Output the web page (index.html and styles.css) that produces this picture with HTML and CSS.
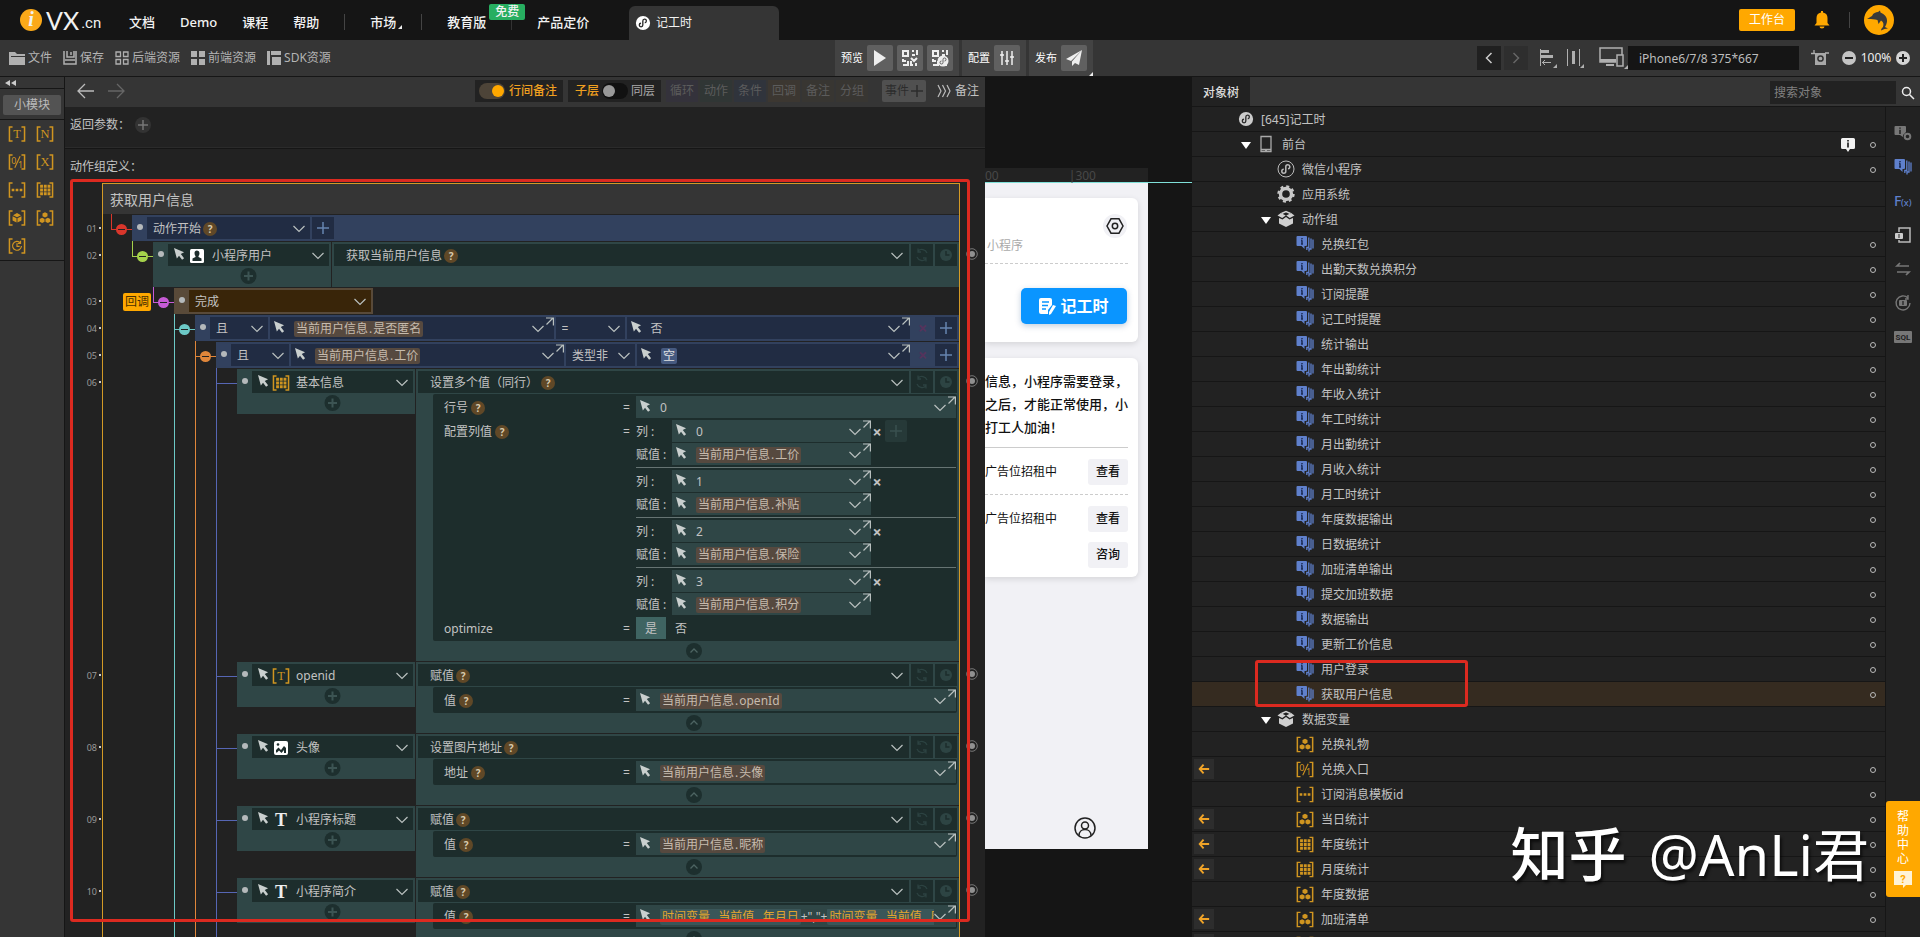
FILE: index.html
```html
<!DOCTYPE html>
<html lang="zh-CN">
<head>
    <meta charset="UTF-8">
    <meta name="viewport" content="width=device-width, initial-scale=1.0">
    <title>iVX - 记工时</title>
    <link rel="stylesheet" href="styles.css">
</head>
<body>

<!-- Icônes partagées -->
<svg class="sprite" aria-hidden="true">
  <symbol id="cursor" viewBox="0 0 12 13"><path fill="#c9cfce" d="M0 0l11 4.600-3.600 1.800L11 11l-2.200 1.800-3.300-4.300-2.400 3z"/></symbol>
  <symbol id="chev" viewBox="0 0 12 8"><path fill="none" stroke="#b9c0bf" stroke-width="1.200" d="M.500 1L6 6.500 11.500 1"/></symbol>
  <symbol id="ne" viewBox="0 0 9 9"><path fill="none" stroke="#b9c0bf" stroke-width="1.200" d="M1 1h7.400v7.500M8 1L1.500 7.500"/></symbol>
  <symbol id="plus" viewBox="0 0 12 12"><path stroke="currentColor" stroke-width="1.500" d="M6 0v12M0 6h12"/></symbol>
  <symbol id="addc" viewBox="0 0 16 16"><circle cx="8" cy="8" r="8" fill="#1d2f2e"/><path stroke="#3c5453" stroke-width="2" d="M8 3.500v9M3.500 8h9"/></symbol>
  <symbol id="upc" viewBox="0 0 16 16"><circle cx="8" cy="8" r="8" fill="#1d2f2e"/><path fill="none" stroke="#4d6462" stroke-width="1.300" d="M4.500 9.500L8 6l3.500 3.500"/></symbol>
  <symbol id="loop" viewBox="0 0 14 14"><path fill="none" stroke="#2c4241" stroke-width="1.300" d="M12 5A5.500 5.500 0 0 0 3 3M2 9a5.500 5.500 0 0 0 9 2M3 .500V4h3M11 13.500V10H8"/></symbol>
  <symbol id="clock" viewBox="0 0 14 14"><circle cx="7" cy="7" r="6" fill="#2d4443"/><path fill="none" stroke="#1d2d2c" stroke-width="1.500" d="M7 3v4h3.500"/></symbol>
  <symbol id="watch" viewBox="0 0 12 12"><circle cx="6" cy="6" r="5.300" fill="none" stroke="#777"/><circle cx="6" cy="6" r="3" fill="#909090"/></symbol>
  <symbol id="brk" viewBox="0 0 20 18"><path fill="none" stroke="currentColor" stroke-width="1.700" d="M5 1H1.500v16H5M15 1h3.500v16H15"/></symbol>
  <symbol id="vT" viewBox="0 0 20 18"><use href="#brk"/><text x="10" y="14" class="vtext">T</text></symbol>
  <symbol id="vN" viewBox="0 0 20 18"><use href="#brk"/><text x="10" y="14" class="vtext">N</text></symbol>
  <symbol id="vX" viewBox="0 0 20 18"><use href="#brk"/><text x="10" y="14" class="vtext">X</text></symbol>
  <symbol id="v01" viewBox="0 0 20 18"><use href="#brk"/><text x="6.500" y="11" class="vnum">0</text><text x="14" y="15.500" class="vnum">1</text><path stroke="currentColor" stroke-width="1.200" d="M13.500 2.500l-6 13"/></symbol>
  <symbol id="vdots" viewBox="0 0 20 18"><use href="#brk"/><path stroke="currentColor" stroke-width="3" d="M4 9h3M8.500 9h3M13 9h3"/></symbol>
  <symbol id="vgrid" viewBox="0 0 20 18"><use href="#brk"/><path stroke="currentColor" stroke-width="3.200" stroke-dasharray="3.200 1" d="M4.500 4.800H17M4.500 9H17M4.500 13.200H17"/></symbol>
  <symbol id="vcube" viewBox="0 0 20 18"><use href="#brk"/><path fill="currentColor" d="M10 3.500l4.500 2.300L10 8.200 5.500 5.800zM5 6.900l4.500 2.300v5L5 11.800zM15 6.900l-4.500 2.300v5l4.500-2.400z"/></symbol>
  <symbol id="vtree" viewBox="0 0 20 18"><use href="#brk"/><g fill="currentColor"><path d="M10 2.500l2.800 1.500v3L10 8.500 7.200 7V4z"/><path d="M6.800 8.700l2.700 1.400v3l-2.700 1.500L4 13.100v-3zM13.200 8.700l2.800 1.400v3l-2.800 1.500-2.700-1.500v-3z"/></g></symbol>
  <symbol id="vtime" viewBox="0 0 20 18"><use href="#brk"/><path fill="none" stroke="currentColor" stroke-width="1.300" d="M13.800 5.500A5 5 0 1 0 15 9M10 6v3.500h3M14 3v3h-3"/></symbol>
  <symbol id="mini" viewBox="0 0 18 18"><circle cx="9" cy="9" r="8"/><path class="knot" d="M6.800 9.300a2 2 0 1 0 2 2V6.700a2 2 0 1 1 2.200 2"/></symbol>
  <symbol id="act" viewBox="0 0 18 18"><path fill="#5f80cc" d="M1.500 1H10a1 1 0 0 1 1 1v8a1 1 0 0 1-1 1H8.500v3L5.500 11h-4a1 1 0 0 1-1-1V2a1 1 0 0 1 1-1z"/><path stroke="#1d2c55" stroke-width="1.500" d="M6 3v1.200M6 5.200v4M5 5.500h1M5 9h2"/><path fill="none" stroke="#5f80cc" stroke-width="1.300" d="M12.800 2.500v10h-2v2.500M15 3.500v10.500h-2v2.500M17 4.500v9"/></symbol>
  <symbol id="box" viewBox="0 0 18 18"><path fill="none" stroke="#d0d0d0" stroke-width="1.500" d="M4.500 3.500L9 1.500l4.500 2"/><path fill="#d0d0d0" d="M3.800 3l5 2.500L5.200 8 .500 5.500zM14.200 3l-5 2.500L12.800 8l4.700-2.500zM2 8l3.500 1.500L9 7l3.500 2.500L16 8v5.500L9 17l-7-3.500z"/></symbol>
  <symbol id="gear" viewBox="0 0 18 18"><circle cx="9" cy="9" r="5.500" fill="none" stroke="#c8c8c8" stroke-width="3.400"/><circle cx="9" cy="9" r="7.600" fill="none" stroke="#c8c8c8" stroke-width="2.200" stroke-dasharray="3 2.970"/></symbol>
  <symbol id="phone" viewBox="0 0 18 18"><path fill="none" stroke="#aaa" stroke-width="1.300" d="M4 1.500h10v15H4zM4 14.500h10M8 16h2"/></symbol>
  <symbol id="left" viewBox="0 0 14 12"><path fill="none" stroke="#f0a428" stroke-width="2.200" d="M13 6H2M6.500 1L2 6l4.500 5"/></symbol>
  <symbol id="qr" viewBox="0 0 18 18"><path fill="none" stroke="#eee" stroke-width="2" d="M2 2h5v5H2zM11 2h2M16 1v5M11 6h3M2 10v2h3M2 16h5v-4M10 9l3 3 3-3M10 12v4h2M15 14v3"/></symbol>
</svg>

<header class="topbar">
  <a class="logo" href="#"><span class="logo-i">i</span><span class="logo-vx">VX</span><span class="logo-cn">.cn</span></a>
  <nav class="topnav">
    <a href="#">文档</a><a href="#">Demo</a><a href="#">课程</a><a href="#">帮助</a>
    <span class="bar"></span>
    <a href="#" class="market">市场</a>
    <span class="bar"></span>
    <a href="#" class="edu">教育版<span class="free">免费</span></a>
    <a href="#" class="price">产品定价</a>
  </nav>
  <div class="doc-tab"><svg width="16" height="16" class="mini-white"><use href="#mini"/></svg>记工时</div>
  <div class="account">
    <button class="work">工作台</button>
    <svg width="16" height="18" viewBox="0 0 16 18"><path fill="#ffa800" d="M7 0h2v1.500c3 .500 4.500 2.500 4.500 5.500v5l2 2.500H.500l2-2.500V7c0-3 1.500-5 4.500-5.500zM5.500 15.500h5a2.500 2 0 0 1-5 0z"/></svg>
    <span class="bar"></span>
    <svg width="30" height="30" viewBox="0 0 30 30"><circle cx="15" cy="15" r="15" fill="#ffa800"/><path fill="#3a3a3a" d="M3 14c2-1 3-2 5-3 1-3 4-4 6-4l2-1.500.500 2c4 1.500 7 5 6.500 9-.300 2-1 4-2 5.500l3 1.500-3.500.500-3.500 1.500c0-1.500 1-2.500 2-3.500 1-3 .500-5-2-6.500l-2.500 3.500-1-4c-3-1-6-1-8.500-1z"/></svg>
  </div>
</header>

<div class="toolbar">
  <div class="files">
    <button><svg width="16" height="13" viewBox="0 0 16 13"><path fill="#b0b0b0" d="M0 0h6l2 2h8v2H2v1h14v8H0z"/></svg>文件</button>
    <button><svg width="14" height="14" viewBox="0 0 14 14"><path fill="none" stroke="#b0b0b0" stroke-width="1.500" d="M1 0v13h12V0M4 0v6h7V0M8 1v3M2 9h10"/></svg>保存</button>
    <button><svg width="14" height="14" viewBox="0 0 14 14"><path fill="none" stroke="#b0b0b0" stroke-width="1.300" d="M1 1h4.500v4.500H1zM8.500 1H13v4.500H8.500zM1 8.500h4.500V13H1zM8.500 8.500H13V13H8.500z"/></svg>后端资源</button>
    <button><svg width="14" height="14" viewBox="0 0 14 14"><path fill="#b0b0b0" d="M0 0h6v6H0zM8 0h6v6H8zM0 8h6v6H0zM8 8h6v6H8z"/></svg>前端资源</button>
    <button><svg width="14" height="14" viewBox="0 0 14 14"><path fill="#b0b0b0" d="M0 0h3v14H0zM4 0h10v4H4zM5 6h9v8H5z"/></svg>SDK资源</button>
  </div>
  <div class="runs">
    <div class="run">预览
      <button aria-label="运行"><svg width="16" height="16" viewBox="0 0 16 16"><path fill="#eee" d="M2 0l12 8-12 8z"/></svg></button>
      <button aria-label="二维码"><svg width="18" height="18"><use href="#qr"/></svg></button>
      <button aria-label="小程序码"><svg width="18" height="18" viewBox="0 0 18 18"><use href="#qr"/><circle cx="12" cy="12" r="5.500" fill="#eee"/><path fill="none" stroke="#606060" d="M10.500 12a1.500 1.500 0 1 0 1.500 1.500v-3a1.500 1.500 0 1 1 1.500 1.500"/></svg></button>
    </div>
    <div class="run">配置
      <button aria-label="配置"><svg width="16" height="16" viewBox="0 0 16 16"><path stroke="#eee" stroke-width="1.500" d="M3 1v14M8 1v14M13 1v14M1 5h4M6 11h4M11 7h4"/></svg></button>
    </div>
    <div class="run corner">发布
      <button aria-label="发布"><svg width="17" height="17" viewBox="0 0 17 17"><path fill="#eee" d="M16 0L0 9l5 2zM16 0L6 11.500V16l3-3 4 2z"/></svg></button>
    </div>
  </div>
  <div class="view">
    <button class="step" aria-label="上一个"><svg width="8" height="12" viewBox="0 0 8 12"><path fill="none" stroke="#ccc" stroke-width="1.500" d="M6.500 1l-5 5 5 5"/></svg></button>
    <button class="step off" aria-label="下一个"><svg width="8" height="12" viewBox="0 0 8 12"><path fill="none" stroke="#666" stroke-width="1.500" d="M1.500 1l5 5-5 5"/></svg></button>
    <svg class="align" width="18" height="20" viewBox="0 0 18 20"><path fill="none" stroke="#b0b0b0" d="M1.500 1v17M3 14.500h9M6 12l-2.500 2.500L6 17"/><path fill="#b0b0b0" d="M2 2h8v3H2zM2 7h12v3H2zM18 16v4h-4z"/></svg>
    <svg class="dist" width="18" height="20" viewBox="0 0 18 20"><path stroke="#b0b0b0" d="M1.500 1v17M13.500 1v17"/><path fill="#b0b0b0" d="M6 3h3v13H6zM18 16v4h-4z"/></svg>
    <svg width="30" height="24" viewBox="0 0 30 24"><path fill="none" stroke="#b0b0b0" stroke-width="1.500" d="M18 16H2V2h22v7M19 9h6v11h-6z"/><path fill="#b0b0b0" d="M2 13h16v3H2zM8 18h8v2H8zM30 19v4h-4z"/></svg>
    <input class="device" type="text" value="iPhone6/7/8 375*667" aria-label="设备尺寸">
    <svg class="crop" width="18" height="16" viewBox="0 0 18 16"><path fill="none" stroke="#b0b0b0" stroke-width="1.300" d="M0 3.500h4M3 0v4M14 3h4"/><path fill="#a8a8a8" d="M4 3h11v12H4z"/><circle cx="9.500" cy="8.500" r="2.600" fill="none" stroke="#333" stroke-width="1.500"/></svg>
    <button aria-label="缩小"><svg width="14" height="14" viewBox="0 0 14 14"><circle cx="7" cy="7" r="7" fill="#c4c4c4"/><path stroke="#222" stroke-width="2" d="M3 7h8"/></svg></button>
    <span class="zoom">100%</span>
    <button aria-label="放大"><svg width="14" height="14" viewBox="0 0 14 14"><circle cx="7" cy="7" r="7" fill="#d4d4d4"/><path stroke="#222" stroke-width="2" d="M3 7h8M7 3v8"/></svg></button>
  </div>
</div>

<main class="studio">
  <aside class="modules">
    <div class="fold"><svg width="12" height="6" viewBox="0 0 12 6"><path fill="#ccc" d="M5 0v6L0 3zM11 0v6L6 3z"/></svg></div>
    <div class="mod-head"><button>小模块</button></div>
    <div class="mod-grid">
      <svg><use href="#vT"/></svg><svg><use href="#vN"/></svg>
      <svg><use href="#v01"/></svg><svg><use href="#vX"/></svg>
      <svg><use href="#vdots"/></svg><svg><use href="#vgrid"/></svg>
      <svg><use href="#vcube"/></svg><svg><use href="#vtree"/></svg>
      <svg><use href="#vtime"/></svg>
    </div>
  </aside>

  <section class="editor">
    <div class="ed-head">
      <button aria-label="后退"><svg width="17" height="16" viewBox="0 0 17 16"><path fill="none" stroke="#bbb" stroke-width="1.300" d="M17 8H1M8 1L1 8l7 7"/></svg></button>
      <button aria-label="前进"><svg width="17" height="16" viewBox="0 0 17 16"><path fill="none" stroke="#666" stroke-width="1.300" d="M0 8h16M9 1l7 7-7 7"/></svg></button>
      <div class="ed-tools">
        <label class="sw"><input type="checkbox" checked>行间备注</label>
        <label class="sw layer">子层<input type="checkbox"><span>同层</span></label>
        <div class="ghosts">
          <button class="g-vio">循环</button><button class="g-grn">动作</button><button class="g-blu">条件</button><button class="g-brn">回调</button><button class="g-olv">备注</button><button class="g-olv">分组</button>
        </div>
        <button class="event">事件<svg width="12" height="12"><use href="#plus"/></svg></button>
        <button class="notes"><svg width="14" height="14" viewBox="0 0 14 14"><path fill="none" stroke="#bbb" stroke-width="1.200" d="M1 1l3 6-3 6M5.500 1l3 6-3 6M10 1l3 6-3 6"/></svg>备注</button>
      </div>
    </div>
    <div class="params-head">返回参数：<svg width="16" height="16" viewBox="0 0 16 16"><circle cx="8" cy="8" r="8" fill="#333"/><path stroke="#777" stroke-width="1.500" d="M8 3v10M3 8h10"/></svg></div>
    <div class="def-head">动作组定义：</div>

    <div class="script">
      <div class="row"><span class="num blank"></span><h2 class="body title">获取用户信息</h2><span class="eye"></span></div>

      <div class="row">
        <span class="num">01</span>
        <div class="body d1">
          <span class="join red"></span>
          <div class="block blue"><i class="dot"></i><button class="sel w161">动作开始<b class="q">?</b><svg class="chev"><use href="#chev"/></svg></button><button class="sq"><svg width="12" height="12"><use href="#plus"/></svg></button></div>
        </div>
        <span class="eye"></span>
      </div>

      <div class="row">
        <span class="num">02</span>
        <div class="body d2">
          <span class="join lime"></span>
          <div class="cell obj">
            <div class="line"><i class="dot"></i><label class="sel"><svg class="cur"><use href="#cursor"/></svg><svg width="14" height="14" viewBox="0 0 14 14"><rect width="14" height="14" rx="1.500" fill="#fff"/><path fill="#1d2d2c" d="M4.500 4a2.500 2.500 0 0 1 5 0q0 2-1 3v1l3 1.500V12h-9V9.500l3-1.500V7q-1-1-1-3z"/></svg><select><option>小程序用户</option></select><svg class="chev"><use href="#chev"/></svg></label></div>
            <svg class="add"><use href="#addc"/></svg>
          </div>
          <div class="cell act">
            <div class="line"><button class="sel">获取当前用户信息<b class="q">?</b><svg class="chev"><use href="#chev"/></svg></button><button class="sm"><svg><use href="#loop"/></svg></button><button class="sm"><svg><use href="#clock"/></svg></button></div>
          </div>
        </div>
        <span class="eye"><svg><use href="#watch"/></svg></span>
      </div>

      <div class="row">
        <span class="num">03</span>
        <div class="body d3">
          <span class="cb">回调</span>
          <span class="join purple"></span>
          <div class="block brown"><i class="dot"></i><label class="sel"><select><option>完成</option></select><svg class="chev"><use href="#chev"/></svg></label></div>
        </div>
        <span class="eye"></span>
      </div>

      <div class="row">
        <span class="num">04</span>
        <div class="body d4">
          <span class="join teal thru"></span>
          <div class="block blue cond"><i class="dot"></i><label class="sel and"><select><option>且</option></select><svg class="chev"><use href="#chev"/></svg></label><button class="expr"><svg class="cur"><use href="#cursor"/></svg><span class="chip">当前用户信息<i>.</i>是否匿名</span><svg class="chev"><use href="#chev"/></svg><svg class="ne"><use href="#ne"/></svg></button><label class="sel cmp"><select><option>=</option></select><svg class="chev"><use href="#chev"/></svg></label><button class="expr"><svg class="cur"><use href="#cursor"/></svg><span class="val">否</span><svg class="chev"><use href="#chev"/></svg><svg class="ne"><use href="#ne"/></svg></button><button class="del">×</button><button class="sq"><svg width="12" height="12"><use href="#plus"/></svg></button></div>
        </div>
        <span class="eye"></span>
      </div>

      <div class="row">
        <span class="num">05</span>
        <div class="body d4">
          <span class="guide teal"></span><span class="join orange thru"></span>
          <div class="block blue cond"><i class="dot"></i><label class="sel and"><select><option>且</option></select><svg class="chev"><use href="#chev"/></svg></label><button class="expr"><svg class="cur"><use href="#cursor"/></svg><span class="chip">当前用户信息<i>.</i>工价</span><svg class="chev"><use href="#chev"/></svg><svg class="ne"><use href="#ne"/></svg></button><label class="sel cmp"><select><option>类型非</option></select><svg class="chev"><use href="#chev"/></svg></label><button class="expr"><svg class="cur"><use href="#cursor"/></svg><span class="chip null">空</span><svg class="chev"><use href="#chev"/></svg><svg class="ne"><use href="#ne"/></svg></button><button class="del">×</button><button class="sq"><svg width="12" height="12"><use href="#plus"/></svg></button></div>
        </div>
        <span class="eye"></span>
      </div>

      <div class="row">
        <span class="num">06</span>
        <div class="body d4">
          <span class="guide teal"></span><span class="guide orange"></span><span class="join indigo thru leaf"></span>
          <div class="cell obj">
            <div class="line"><i class="dot"></i><label class="sel"><svg class="cur"><use href="#cursor"/></svg><svg class="var"><use href="#vgrid"/></svg><select><option>基本信息</option></select><svg class="chev"><use href="#chev"/></svg></label></div>
            <svg class="add"><use href="#addc"/></svg>
          </div>
          <div class="cell act">
            <div class="line"><button class="sel">设置多个值（同行）<b class="q wide">?</b><svg class="chev"><use href="#chev"/></svg></button><button class="sm"><svg><use href="#loop"/></svg></button><button class="sm"><svg><use href="#clock"/></svg></button></div>
            <div class="args">
              <div class="arg"><span class="name">行号 <b class="q">?</b></span><span class="eq">=</span><button class="expr"><svg class="cur"><use href="#cursor"/></svg><span class="val">0</span><svg class="chev"><use href="#chev"/></svg><svg class="ne"><use href="#ne"/></svg></button></div>
              <div class="arg"><span class="name">配置列值 <b class="q">?</b></span><span class="eq">=</span>
                <div class="cols">
                  <div class="col"><span>列 :</span><button class="expr"><svg class="cur"><use href="#cursor"/></svg><span class="val">0</span><svg class="chev"><use href="#chev"/></svg><svg class="ne"><use href="#ne"/></svg></button><button class="rm">×</button><button class="more"><svg width="12" height="12"><use href="#plus"/></svg></button>
                    <span>赋值 :</span><button class="expr"><svg class="cur"><use href="#cursor"/></svg><span class="chip">当前用户信息<i>.</i>工价</span><svg class="chev"><use href="#chev"/></svg><svg class="ne"><use href="#ne"/></svg></button></div>
                  <div class="col"><span>列 :</span><button class="expr"><svg class="cur"><use href="#cursor"/></svg><span class="val">1</span><svg class="chev"><use href="#chev"/></svg><svg class="ne"><use href="#ne"/></svg></button><button class="rm">×</button><span></span>
                    <span>赋值 :</span><button class="expr"><svg class="cur"><use href="#cursor"/></svg><span class="chip">当前用户信息<i>.</i>补贴</span><svg class="chev"><use href="#chev"/></svg><svg class="ne"><use href="#ne"/></svg></button></div>
                  <div class="col"><span>列 :</span><button class="expr"><svg class="cur"><use href="#cursor"/></svg><span class="val">2</span><svg class="chev"><use href="#chev"/></svg><svg class="ne"><use href="#ne"/></svg></button><button class="rm">×</button><span></span>
                    <span>赋值 :</span><button class="expr"><svg class="cur"><use href="#cursor"/></svg><span class="chip">当前用户信息<i>.</i>保险</span><svg class="chev"><use href="#chev"/></svg><svg class="ne"><use href="#ne"/></svg></button></div>
                  <div class="col"><span>列 :</span><button class="expr"><svg class="cur"><use href="#cursor"/></svg><span class="val">3</span><svg class="chev"><use href="#chev"/></svg><svg class="ne"><use href="#ne"/></svg></button><button class="rm">×</button><span></span>
                    <span>赋值 :</span><button class="expr"><svg class="cur"><use href="#cursor"/></svg><span class="chip">当前用户信息<i>.</i>积分</span><svg class="chev"><use href="#chev"/></svg><svg class="ne"><use href="#ne"/></svg></button></div>
                </div>
              </div>
              <div class="arg"><span class="name">optimize</span><span class="eq">=</span><div class="yesno"><label><input type="radio" name="opt" checked>是</label><label><input type="radio" name="opt">否</label></div></div>
            </div>
            <svg class="up"><use href="#upc"/></svg>
          </div>
        </div>
        <span class="eye"><svg><use href="#watch"/></svg></span>
      </div>

      <div class="row">
        <span class="num">07</span>
        <div class="body d4">
          <span class="guide teal"></span><span class="guide orange"></span><span class="join indigo thru leaf"></span>
          <div class="cell obj">
            <div class="line"><i class="dot"></i><label class="sel"><svg class="cur"><use href="#cursor"/></svg><svg class="var"><use href="#vT"/></svg><select><option>openid</option></select><svg class="chev"><use href="#chev"/></svg></label></div>
            <svg class="add"><use href="#addc"/></svg>
          </div>
          <div class="cell act">
            <div class="line"><button class="sel">赋值<b class="q">?</b><svg class="chev"><use href="#chev"/></svg></button><button class="sm"><svg><use href="#loop"/></svg></button><button class="sm"><svg><use href="#clock"/></svg></button></div>
            <div class="args"><div class="arg"><span class="name">值 <b class="q">?</b></span><span class="eq">=</span><button class="expr"><svg class="cur"><use href="#cursor"/></svg><span class="chip">当前用户信息<i>.</i>openId</span><svg class="chev"><use href="#chev"/></svg><svg class="ne"><use href="#ne"/></svg></button></div></div>
            <svg class="up"><use href="#upc"/></svg>
          </div>
        </div>
        <span class="eye"><svg><use href="#watch"/></svg></span>
      </div>

      <div class="row">
        <span class="num">08</span>
        <div class="body d4">
          <span class="guide teal"></span><span class="guide orange"></span><span class="join indigo thru leaf"></span>
          <div class="cell obj">
            <div class="line"><i class="dot"></i><label class="sel"><svg class="cur"><use href="#cursor"/></svg><svg width="14" height="14" viewBox="0 0 14 14"><rect width="14" height="14" rx="2" fill="#fff"/><circle cx="4" cy="3.500" r="1.300" fill="#1d2d2c"/><path fill="#1d2d2c" d="M2 11.500V9l2.500-2.500L7 9l3-4 2 2v5h-2V9L7.500 12 5 9.500l-2 2z"/></svg><select><option>头像</option></select><svg class="chev"><use href="#chev"/></svg></label></div>
            <svg class="add"><use href="#addc"/></svg>
          </div>
          <div class="cell act">
            <div class="line"><button class="sel">设置图片地址<b class="q">?</b><svg class="chev"><use href="#chev"/></svg></button><button class="sm"><svg><use href="#loop"/></svg></button><button class="sm"><svg><use href="#clock"/></svg></button></div>
            <div class="args"><div class="arg"><span class="name">地址 <b class="q">?</b></span><span class="eq">=</span><button class="expr"><svg class="cur"><use href="#cursor"/></svg><span class="chip">当前用户信息<i>.</i>头像</span><svg class="chev"><use href="#chev"/></svg><svg class="ne"><use href="#ne"/></svg></button></div></div>
            <svg class="up"><use href="#upc"/></svg>
          </div>
        </div>
        <span class="eye"><svg><use href="#watch"/></svg></span>
      </div>

      <div class="row">
        <span class="num">09</span>
        <div class="body d4">
          <span class="guide teal"></span><span class="guide orange"></span><span class="join indigo thru leaf"></span>
          <div class="cell obj">
            <div class="line"><i class="dot"></i><label class="sel"><svg class="cur"><use href="#cursor"/></svg><span class="bigt">T</span><select><option>小程序标题</option></select><svg class="chev"><use href="#chev"/></svg></label></div>
            <svg class="add"><use href="#addc"/></svg>
          </div>
          <div class="cell act">
            <div class="line"><button class="sel">赋值<b class="q">?</b><svg class="chev"><use href="#chev"/></svg></button><button class="sm"><svg><use href="#loop"/></svg></button><button class="sm"><svg><use href="#clock"/></svg></button></div>
            <div class="args"><div class="arg"><span class="name">值 <b class="q">?</b></span><span class="eq">=</span><button class="expr"><svg class="cur"><use href="#cursor"/></svg><span class="chip">当前用户信息<i>.</i>昵称</span><svg class="chev"><use href="#chev"/></svg><svg class="ne"><use href="#ne"/></svg></button></div></div>
            <svg class="up"><use href="#upc"/></svg>
          </div>
        </div>
        <span class="eye"><svg><use href="#watch"/></svg></span>
      </div>

      <div class="row">
        <span class="num">10</span>
        <div class="body d4">
          <span class="guide teal"></span><span class="guide orange"></span><span class="join indigo thru leaf"></span>
          <div class="cell obj">
            <div class="line"><i class="dot"></i><label class="sel"><svg class="cur"><use href="#cursor"/></svg><span class="bigt">T</span><select><option>小程序简介</option></select><svg class="chev"><use href="#chev"/></svg></label></div>
            <svg class="add"><use href="#addc"/></svg>
          </div>
          <div class="cell act">
            <div class="line"><button class="sel">赋值<b class="q">?</b><svg class="chev"><use href="#chev"/></svg></button><button class="sm"><svg><use href="#loop"/></svg></button><button class="sm"><svg><use href="#clock"/></svg></button></div>
            <div class="args"><div class="arg"><span class="name">值 <b class="q">?</b></span><span class="eq">=</span><button class="expr"><svg class="cur"><use href="#cursor"/></svg><span class="clip"><span class="chip time">时间变量<i>.</i> 当前值<i>.</i> 年月日</span>+","+<span class="chip time">时间变量<i>.</i> 当前值<i>.</i> 周</span></span><svg class="chev"><use href="#chev"/></svg><svg class="ne"><use href="#ne"/></svg></button></div></div>
            <svg class="up"><use href="#upc"/></svg>
          </div>
        </div>
        <span class="eye"><svg><use href="#watch"/></svg></span>
      </div>
    </div>
    <div class="mark mark-script"></div>
  </section>

  <section class="canvas">
    <div class="ruler"><span>00</span><span>|300</span></div>
    <div class="screen">
      <div class="card">
        <svg class="hex" width="24" height="24" viewBox="0 0 24 24"><circle cx="12" cy="12" r="12" fill="#f1f1f5"/><path fill="none" stroke="#222" stroke-width="1.500" d="M8 4.800h8l4 7.200-4 7.200H8L4 12z"/><circle cx="12" cy="12" r="2.700" fill="none" stroke="#222" stroke-width="1.500"/></svg>
        <p class="sub">小程序</p>
        <hr class="dash">
        <button class="clockin"><svg width="17" height="17" viewBox="0 0 17 17"><path fill="#fff" d="M2 0h9a2 2 0 0 1 2 2v5l-4 5v4H2a2 2 0 0 1-2-2V2a2 2 0 0 1 2-2zM14 7l3 1-5 8-2 1v-3z"/><path stroke="#0a95ff" stroke-width="1.300" d="M3 4h7M3 7.500h6M3 11h4"/></svg>记工时</button>
      </div>
      <div class="card">
        <p class="tip">信息，小程序需要登录，<br>之后，才能正常使用，小<br>打工人加油！</p>
        <hr>
        <div class="ad"><span>广告位招租中</span><button>查看</button></div>
        <hr class="dash">
        <div class="ad"><span>广告位招租中</span><button>查看</button></div>
        <div class="ad last"><button>咨询</button></div>
      </div>
      <svg class="me" width="22" height="22" viewBox="0 0 22 22"><g fill="none" stroke="#222" stroke-width="1.500"><circle cx="11" cy="11" r="10"/><circle cx="11" cy="8.500" r="3.500"/><path d="M5 18.500c0-8 12-8 12 0"/></g></svg>
    </div>
  </section>

  <section class="objects">
    <div class="obj-head">
      <h3>对象树</h3>
      <form class="search"><input type="text" placeholder="搜索对象" aria-label="搜索对象"><button type="button" aria-label="搜索"><svg width="14" height="14" viewBox="0 0 14 14"><g fill="none" stroke="#eee" stroke-width="1.500"><circle cx="5.500" cy="5.500" r="4"/><path d="M8.500 8.500L13 13"/></g></svg></button></form>
    </div>
    <div class="obj-body">
      <ul class="tree">
        <li class="t1"><svg class="mini-fill"><use href="#mini"/></svg>[645]记工时</li>
        <li class="t2 open"><svg><use href="#phone"/></svg>前台<svg class="info" viewBox="0 0 14 14"><path fill="#f2f2f2" d="M1.500 0h11A1.500 1.500 0 0 1 14 1.500v8a1.500 1.500 0 0 1-1.500 1.500H9l-2 3-2-3H1.500A1.500 1.500 0 0 1 0 9.500v-8A1.500 1.500 0 0 1 1.500 0z"/><path stroke="#222" stroke-width="1.700" d="M7 2v1.500M7 4.500v5"/></svg><i class="o"></i></li>
        <li class="t3"><svg class="mini-line"><use href="#mini"/></svg>微信小程序<i class="o"></i></li>
        <li class="t3"><svg><use href="#gear"/></svg>应用系统</li>
        <li class="t3 open"><svg><use href="#box"/></svg>动作组</li>
        <li class="t4"><svg><use href="#act"/></svg>兑换红包<i class="o"></i></li>
        <li class="t4"><svg><use href="#act"/></svg>出勤天数兑换积分<i class="o"></i></li>
        <li class="t4"><svg><use href="#act"/></svg>订阅提醒<i class="o"></i></li>
        <li class="t4"><svg><use href="#act"/></svg>记工时提醒<i class="o"></i></li>
        <li class="t4"><svg><use href="#act"/></svg>统计输出<i class="o"></i></li>
        <li class="t4"><svg><use href="#act"/></svg>年出勤统计<i class="o"></i></li>
        <li class="t4"><svg><use href="#act"/></svg>年收入统计<i class="o"></i></li>
        <li class="t4"><svg><use href="#act"/></svg>年工时统计<i class="o"></i></li>
        <li class="t4"><svg><use href="#act"/></svg>月出勤统计<i class="o"></i></li>
        <li class="t4"><svg><use href="#act"/></svg>月收入统计<i class="o"></i></li>
        <li class="t4"><svg><use href="#act"/></svg>月工时统计<i class="o"></i></li>
        <li class="t4"><svg><use href="#act"/></svg>年度数据输出<i class="o"></i></li>
        <li class="t4"><svg><use href="#act"/></svg>日数据统计<i class="o"></i></li>
        <li class="t4"><svg><use href="#act"/></svg>加班清单输出<i class="o"></i></li>
        <li class="t4"><svg><use href="#act"/></svg>提交加班数据<i class="o"></i></li>
        <li class="t4"><svg><use href="#act"/></svg>数据输出<i class="o"></i></li>
        <li class="t4"><svg><use href="#act"/></svg>更新工价信息<i class="o"></i></li>
        <li class="t4"><svg><use href="#act"/></svg>用户登录<i class="o"></i></li>
        <li class="t4 on"><svg><use href="#act"/></svg>获取用户信息<i class="o"></i><span class="mark mark-tree"></span></li>
        <li class="t3 open"><svg><use href="#box"/></svg>数据变量</li>
        <li class="t4"><svg class="var"><use href="#vtree"/></svg>兑换礼物</li>
        <li class="t4 ref"><svg class="back"><use href="#left"/></svg><svg class="var"><use href="#v01"/></svg>兑换入口<i class="o"></i></li>
        <li class="t4"><svg class="var"><use href="#vdots"/></svg>订阅消息模板id<i class="o"></i></li>
        <li class="t4 ref"><svg class="back"><use href="#left"/></svg><svg class="var"><use href="#vtree"/></svg>当日统计<i class="o"></i></li>
        <li class="t4 ref"><svg class="back"><use href="#left"/></svg><svg class="var"><use href="#vgrid"/></svg>年度统计<i class="o"></i></li>
        <li class="t4 ref"><svg class="back"><use href="#left"/></svg><svg class="var"><use href="#vgrid"/></svg>月度统计<i class="o"></i></li>
        <li class="t4"><svg class="var"><use href="#vtree"/></svg>年度数据<i class="o"></i></li>
        <li class="t4 ref"><svg class="back"><use href="#left"/></svg><svg class="var"><use href="#vtree"/></svg>加班清单<i class="o"></i></li>
        <li class="t4 ref"><svg class="back"><use href="#left"/></svg><svg class="var"><use href="#vtree"/></svg></li>
      </ul>
      <div class="strip">
        <svg viewBox="0 0 18 18"><path fill="#777" d="M1.500 2H11a1 1 0 0 1 1 1v5l-3 3v2l-3-2H1.500a1 1 0 0 1-1-1V3a1 1 0 0 1 1-1z"/><path stroke="#222" stroke-width="1.500" d="M6 3.500v1.300M6 5.800V10"/><circle cx="13.500" cy="12.500" r="2.800" fill="none" stroke="#777" stroke-width="2"/></svg>
        <svg><use href="#act"/></svg>
        <svg class="fx" viewBox="0 0 18 18"><text x="0" y="14" font-size="14">F</text><text x="7" y="14" font-size="9">(x)</text></svg>
        <svg viewBox="0 0 18 18"><path fill="none" stroke="#bbb" stroke-width="1.500" d="M5 6V2h11v14H5v-2"/><rect x="1" y="7" width="8" height="6" rx="1" fill="#ccc"/><path stroke="#222" d="M5 8v4"/></svg>
        <svg viewBox="0 0 18 18"><path fill="none" stroke="#777" stroke-width="1.700" d="M15 6H3l3-3M3 12h12l-3 3"/></svg>
        <svg viewBox="0 0 18 18"><path fill="none" stroke="#777" stroke-width="1.400" d="M14 4a7 7 0 1 0 2 5M14 1v4h-3"/><rect x="5" y="6" width="8" height="6" rx="1" fill="#777"/><path stroke="#222" stroke-width="1.300" d="M9 7v4"/></svg>
        <svg class="sql" viewBox="0 0 18 18"><rect y="3" width="18" height="12" rx="1" fill="#777"/><text x="9" y="12">SQL</text></svg>
      </div>
    </div>
    <a class="help" href="#">帮<br>助<br>中<br>心<svg width="18" height="17" viewBox="0 0 18 17"><path fill="#fff3d6" d="M0 0h18v14h-6l-3 3v-3H0z"/><text x="9" y="11.500">?</text></svg></a>
    <div class="watermark"><b>知乎</b><span>@AnLi君</span></div>
  </section>
</main>

</body>
</html>
```
FILE: styles.css
```css
* {
    box-sizing: border-box;
}
body {
    margin: 0;
    height: 100vh;
    display: flex;
    flex-direction: column;
    overflow: hidden;
    background: #151515;
    color: #c2c2c2;
    font-family: "Noto Sans", "Noto Sans CJK SC", sans-serif;
    font-size: 12px;
    line-height: 16px;
}
a {
    color: inherit;
    text-decoration: none;
}
button, input, select {
    font: inherit;
    color: inherit;
    background: none;
    border: 0;
    padding: 0;
    margin: 0;
    outline: 0;
    appearance: none;
}
button {
    cursor: pointer;
    white-space: nowrap;
}
h2, h3, p, ul {
    margin: 0;
    padding: 0;
    font-size: 12px;
    font-weight: normal;
    list-style: none;
}
svg {
    display: block;
    flex: none;
}
i {
    font-style: normal;
}
.sprite {
    display: none;
}
.vtext {
    font: 14px "Liberation Serif", serif;
    fill: currentColor;
    text-anchor: middle;
}
.vnum {
    font: 10px "Noto Sans", sans-serif;
    fill: currentColor;
    text-anchor: middle;
}
.bar {
    width: 1px;
    height: 16px;
    background: #444;
}

/* Barre du haut */
.topbar {
    height: 40px;
    flex: none;
    display: flex;
    align-items: center;
    padding: 0 26px 0 20px;
    color: #f2f2f2;
    font-size: 13px;
}
.logo {
    display: flex;
    align-items: center;
    width: 109px;
}
.logo-i {
    width: 22px;
    height: 22px;
    border-radius: 50%;
    background: #fba919;
    font: italic bold 20px/21px "Liberation Serif", serif;
    text-align: center;
}
.logo-vx {
    margin-left: 4px;
    font: 25px/24px Lato, sans-serif;
}
.logo-cn {
    margin-left: 2px;
    padding-top: 6px;
    font: 15px/18px Roboto, sans-serif;
}
.topnav {
    display: flex;
    align-items: center;
    height: 40px;
    gap: 25px;
    padding-top: 3px;
    width: 500px;
    font-weight: 500;
}
.topnav .market {
    position: relative;
}
.market::after, .corner::after {
    content: "";
    position: absolute;
    right: -6px;
    bottom: 1px;
    border: 2px solid transparent;
    border-right-color: #eee;
    border-bottom-color: #eee;
}
.edu {
    position: relative;
    padding-right: 25px;
    border-right: 1px solid #333;
}
.free {
    position: absolute;
    left: 42px;
    top: -10px;
    padding: 0 6px;
    border-radius: 2px;
    background: #27ae60;
    font-size: 12px;
    white-space: nowrap;
}
.doc-tab {
    align-self: flex-end;
    display: flex;
    align-items: center;
    gap: 5px;
    width: 150px;
    height: 34px;
    padding-left: 6px;
    border-radius: 6px 6px 0 0;
    background: #353535;
    font-size: 12px;
}
.mini-white {
    fill: #fff;
}
.mini-white, .mini-fill {
    --knot: #2a2a2a;
}
.knot {
    fill: none;
    stroke: var(--knot);
    stroke-width: 1.5px;
}
.account {
    margin-left: auto;
    display: flex;
    align-items: center;
    gap: 19px;
}
.account .bar:last-of-type {
    margin-right: -5px;
}
.work {
    width: 56px;
    height: 22px;
    border-radius: 2px;
    background: #ffa800;
    color: #fff;
    font-size: 12px;
}

/* Barre d'outils */
.toolbar {
    height: 37px;
    flex: none;
    display: flex;
    align-items: stretch;
    background: #353535;
    border-bottom: 1px solid #161616;
}
.files {
    display: flex;
    align-items: center;
    gap: 11px;
    width: 835px;
    padding-left: 9px;
}
.files button {
    display: flex;
    align-items: center;
    gap: 3px;
    color: #b4b4b4;
}
.runs {
    display: flex;
    gap: 3px;
    font-size: 11px;
    color: #fff;
}
.run {
    display: flex;
    align-items: center;
    gap: 4px;
    padding: 0 6px;
    background: #434343;
}
.run button {
    width: 26px;
    height: 26px;
    border-radius: 2px;
    background: #606060;
    display: grid;
    place-items: center;
}
.corner {
    position: relative;
}
.corner::after {
    right: 0;
    bottom: 0;
}
.view {
    margin-left: auto;
    display: flex;
    align-items: center;
    padding-right: 10px;
}
.step {
    width: 24px;
    height: 24px;
    margin-right: 3px;
    background: #202020;
    display: grid;
    place-items: center;
}
.step.off {
    background: #2e2e2e;
    margin-right: 11px;
}
.align {
    margin-right: 9px;
}
.dist {
    margin-right: 14px;
}
.device {
    width: 171px;
    height: 24px;
    padding-left: 11px;
    background: #151515;
    color: #bdbdbd;
}
.crop {
    margin: 0 13px 0 12px;
}
.zoom {
    width: 40px;
    text-align: center;
    color: #eee;
}

/* Zone de travail */
.studio {
    flex: 1;
    min-height: 0;
    display: grid;
    grid-template-columns: 65px minmax(0, 920fr) minmax(0, 207fr) minmax(0, 728fr);
    grid-template-rows: minmax(0, 1fr);
}
.modules {
    background: #353535;
    border-right: 1px solid #161616;
    color: #d09520;
}
.fold {
    height: 12px;
    padding: 3px 5px;
    border-bottom: 1px solid #161616;
}
.mod-head {
    padding: 6px 3px 4px;
    height: 31px;
    border-bottom: 1px solid #161616;
}
.mod-head button {
    width: 100%;
    height: 20px;
    border-radius: 2px;
    background: #535353;
    color: #bbb;
}
.mod-grid {
    display: grid;
    grid-template-columns: 18px 18px;
    gap: 12px 10px;
    padding: 6px 8px;
    border-bottom: 1px solid #161616;
}
.mod-grid svg {
    width: 18px;
    height: 16px;
}

.editor {
    position: relative;
    overflow: hidden;
    background: #222;
}
.ed-head {
    height: 30px;
    display: flex;
    align-items: center;
    gap: 14px;
    padding: 0 6px 2px 12px;
    background: #353535;
}
.ed-tools {
    margin-left: auto;
    display: flex;
    align-items: center;
    gap: 5px;
}
.sw {
    display: flex;
    align-items: center;
    gap: 4px;
    height: 22px;
    padding: 0 6px 0 4px;
    background: #222;
    color: #f0a020;
    font-weight: 500;
}
.sw input {
    width: 26px;
    height: 16px;
    border-radius: 8px;
    background: #111;
}
.sw input::before {
    content: "";
    display: block;
    width: 12px;
    height: 12px;
    margin: 2px 1px;
    border-radius: 50%;
    background: #999;
}
.sw input:checked {
    background: #4d4438;
}
.sw input:checked::before {
    margin-left: 13px;
    background: #ffa800;
}
.layer {
    padding-left: 7px;
    gap: 3px;
}
.layer span {
    color: #aaa;
    font-weight: 400;
}
.ghosts {
    display: flex;
    gap: 2px;
}
.ghosts button {
    width: 32px;
    height: 22px;
    color: #5c5c5c;
}
.g-vio { background: #34323b; }
.g-grn { background: #303635; }
.g-blu { background: #30343c; }
.g-brn { background: #3c3731; }
.g-olv { background: #383632; }
.event {
    display: flex;
    align-items: center;
    gap: 2px;
    width: 44px;
    height: 22px;
    margin-left: 9px;
    padding-left: 3px;
    border-radius: 2px;
    background: #505050;
    color: #2c2c2c;
}
.notes {
    display: flex;
    align-items: center;
    gap: 4px;
    margin-left: 6px;
}
.params-head {
    display: flex;
    align-items: flex-start;
    gap: 5px;
    height: 42px;
    padding: 10px 5px;
    border-bottom: 1px solid #161616;
    box-shadow: 0 -1px #2b2b2b inset;
}
.def-head {
    height: 34px;
    padding: 10px 5px;
}

/* Lignes du script */
.row {
    display: flex;
}
.num {
    width: 37px;
    padding: 7px 1px 0 0;
    text-align: right;
    font-size: 9px;
    color: #999;
}
.num::after {
    content: "";
    display: inline-block;
    width: 2px;
    height: 2px;
    margin: 0 0 3px 2px;
    background: #ccc;
}
.num.blank::after {
    display: none;
}
.body {
    flex: 1;
    min-width: 0;
    display: flex;
    padding-top: 1px;
    border: solid #d39a26;
    border-width: 0 1px;
}
.title {
    height: 31px;
    padding: 8px 7px 0;
    border-top-width: 1px;
    background: #353535;
    font-size: 14px;
}
.eye {
    width: 25px;
    padding: 7px 6px;
}
.eye svg {
    width: 12px;
    height: 12px;
}
.d1 { padding-left: 8px; }
.d2 { padding-left: 29px; }
.d3 { padding-left: 20px; }
.d4 { padding-left: 71px; }
.red { color: #d9362b; }
.lime { color: #a5d24b; }
.purple { color: #c65bd6; }
.teal { color: #6cc9c6; }
.orange { color: #e0863a; }
.indigo { color: #5666b4; }
.guide, .join {
    flex: none;
    width: 21px;
    margin-top: -1px;
    position: relative;
    background: linear-gradient(currentColor, currentColor) 0 0 / 1px 100% no-repeat;
}
.join {
    background: linear-gradient(currentColor, currentColor) 0 0 / 1px 15px no-repeat,
        linear-gradient(currentColor, currentColor) 0 15px / 100% 1px no-repeat;
}
.thru {
    background-size: 1px 100%, 100% 1px;
}
.join::after {
    content: "";
    position: absolute;
    left: 5px;
    top: 10px;
    width: 11px;
    height: 11px;
    border-radius: 50%;
    background: linear-gradient(#222, #222) center / 7px 1px no-repeat currentColor;
}
.leaf::after {
    display: none;
}
.cb {
    width: 28px;
    height: 18px;
    margin: 5px 2px 0 0;
    border-radius: 2px;
    background: #ffa800;
    color: #4a3000;
    line-height: 18px;
    text-align: center;
}
.block {
    --in: #212c43;
    flex: 1;
    min-width: 0;
    height: 26px;
    display: flex;
    gap: 2px;
    padding: 2px;
}
.blue {
    background: #32415e;
}
.brown {
    --in: #392509;
    flex: none;
    width: 199px;
    background: #594a39;
}
.cell {
    --in: #1d2d2c;
    padding: 2px;
    background: #2f4646;
}
.obj {
    flex: none;
    width: 178px;
    height: 45px;
    margin-right: 1px;
}
.act {
    flex: 1;
    min-width: 0;
}
.line {
    display: flex;
    gap: 2px;
    height: 22px;
}
.dot {
    flex: none;
    align-self: center;
    width: 6px;
    height: 6px;
    margin: 0 2px 2px 3px;
    border-radius: 50%;
    background: #b5b9bb;
}
.sel, .expr {
    position: relative;
    display: flex;
    align-items: center;
    flex: 1;
    min-width: 0;
    height: 22px;
    background: var(--in);
    text-align: left;
}
.sel {
    padding: 2px 5px 0 6px;
}
.act .sel {
    padding: 2px 12px 0;
}
.act .sel .chev {
    margin-right: -6px;
}
.sel select {
    flex: 1;
    min-width: 0;
    height: 20px;
}
.w161 {
    flex: 0 0 163px;
}
.sel .cur {
    margin-right: 5px;
}
.sel .cur ~ select {
    margin-left: 8px;
}
.and {
    flex: 0 0 58px;
}
.cmp {
    flex: 0 0 69px;
}
.cur {
    width: 11px;
    height: 12px;
    margin-bottom: 4px;
}
.chev {
    width: 12px;
    height: 8px;
    margin-left: auto;
}
.var {
    width: 18px;
    height: 16px;
    color: #d09520;
}
.sel .var {
    margin: 0 -2px;
}
.bigt {
    width: 14px;
    font: bold 18px/16px "Liberation Serif", serif;
    color: #eee;
    text-align: center;
}
.q {
    display: inline-grid;
    place-items: center;
    width: 14px;
    height: 14px;
    margin: 0 2px;
    border-radius: 50%;
    background: #604827;
    color: #d8cbb0;
    font-size: 10px;
    line-height: 14px;
}
.name .q {
    margin: 0;
}
.q.wide {
    margin-left: 3px;
}
.sm {
    width: 22px;
    background: #1d2d2c;
    display: grid;
    place-items: center;
}
.sm svg {
    width: 14px;
    height: 14px;
}
.sq {
    width: 22px;
    background: #212c43;
    color: #6584b0;
    display: grid;
    place-items: center;
}
.del {
    width: 21px;
    color: #55335c;
    font-size: 16px;
    font-weight: bold;
}
.expr {
    padding: 2px 10px 0 4px;
}
.expr .cur {
    margin-right: 9px;
}
.ne {
    position: absolute;
    right: 0;
    top: 0;
    width: 9px;
    height: 9px;
}
.chip {
    padding: 0 2px;
    border-radius: 2px;
    background: #56493f;
    color: #c6bbae;
}
.chip i {
    padding: 0 1px;
}
.null {
    background: #465a80;
    color: #e0e0e0;
}
.time {
    background: #3a5659;
    color: #e0a52e;
}
.clip {
    flex: 1;
    overflow: hidden;
    white-space: nowrap;
}
.add, .up {
    width: calc(100% - 13px);
    height: 16px;
    margin: 2px 0 0 13px;
}
.args {
    display: flex;
    flex-direction: column;
    gap: 2px;
    margin: 1px 0 0 15px;
    padding: 2px 1px 2px 11px;
    border-radius: 2px;
    background: #1d2d2c;
}
.arg {
    --in: #2f4646;
    display: flex;
    align-items: flex-start;
    line-height: 24px;
    height: 22px;
}
.arg:has(.cols) {
    height: auto;
}
.name {
    flex: 0 0 179px;
}
.eq {
    flex: 0 0 13px;
}
.arg > .expr {
    line-height: 16px;
}
.cols {
    flex: 1;
}
.col {
    display: grid;
    grid-template-columns: 36px 199px 12px 24px;
    grid-auto-rows: 22px;
    row-gap: 1px;
}
.col + .col {
    margin-top: 2px;
    padding-top: 2px;
    border-top: 1px solid #667473;
}
.col .expr {
    line-height: 16px;
}
.rm {
    font-size: 16px;
    font-weight: bold;
}
.more {
    width: 22px;
    margin-left: 2px;
    border-radius: 2px;
    background: #263938;
    color: #3a504f;
    display: grid;
    place-items: center;
}
.yesno {
    display: flex;
}
.yesno label {
    width: 30px;
    height: 22px;
    text-align: center;
}
.yesno input {
    position: absolute;
}
.yesno label:has(:checked) {
    background: #3f6462;
}
.mark {
    position: absolute;
    border: 3px solid #dc2a20;
    border-radius: 3px;
    pointer-events: none;
}
.mark-script {
    inset: 102px 15px 15px 5px;
}

/* Aperçu du téléphone */
.canvas {
    padding-top: 91px;
    overflow: hidden;
}
.ruler {
    display: flex;
    justify-content: space-between;
    height: 15px;
    padding-right: 96px;
    border-bottom: 1px solid #7fe0d8;
    background: linear-gradient(#222, #222) 0 0 / calc(100% - 44px) 100% no-repeat;
    color: #484848;
}
.screen {
    display: flex;
    flex-direction: column;
    gap: 16px;
    height: 666px;
    margin-right: 44px;
    padding: 15px 10px 0 0;
    background: #f1f1f5;
    color: #111;
}
.card {
    padding-right: 10px;
    border-radius: 0 6px 6px 0;
    background: #fff;
    box-shadow: 0 2px 6px rgba(0, 0, 0, 0.12);
}
.hex {
    margin: 16px 1px 0 auto;
}
.sub {
    padding-left: 2px;
    color: #aaa;
}
.card hr {
    margin: 0;
    border: 0;
    border-top: 1px solid #ccc;
}
.card .dash {
    border-top-style: dashed;
}
.sub + .dash {
    margin-top: 9px;
}
.clockin {
    display: flex;
    align-items: center;
    justify-content: center;
    gap: 4px;
    width: 106px;
    height: 36px;
    margin: 24px 1px 18px auto;
    border-radius: 5px;
    background: #0a95ff;
    box-shadow: 0 2px 6px rgba(0, 60, 120, 0.25);
    color: #fff;
    font-size: 16px;
    font-weight: bold;
}
.tip {
    padding: 12px 0 8px;
    font-size: 13px;
    font-weight: 500;
    line-height: 23px;
    white-space: nowrap;
}
.ad {
    display: flex;
    align-items: center;
    justify-content: space-between;
    height: 46px;
    padding-top: 1px;
}
.ad button {
    width: 40px;
    height: 26px;
    border-radius: 3px;
    background: #f1f1f5;
    font-weight: 500;
}
.ad.last {
    justify-content: flex-end;
    align-items: flex-start;
    height: 36px;
}
.me {
    margin: auto 42px 10px auto;
}

/* Arbre des objets */
.objects {
    position: relative;
    display: flex;
    flex-direction: column;
    background: #222;
    overflow: hidden;
}
.obj-head {
    flex: none;
    display: flex;
    height: 30px;
    background: #353535;
    border-bottom: 1px solid #161616;
}
.obj-head h3 {
    width: 58px;
    line-height: 31px;
    text-align: center;
    background: #222;
    color: #ddd;
    font-weight: 500;
}
.search {
    display: flex;
    width: 150px;
    height: 23px;
    margin: 4px 0 0 auto;
    background: #222;
}
.search input {
    flex: 1;
    min-width: 0;
    padding-left: 4px;
}
.search input::placeholder {
    color: #808080;
}
.search button {
    width: 24px;
    background: #353535;
    display: grid;
    place-items: center;
}
.obj-body {
    flex: 1;
    min-height: 0;
    display: flex;
}
.tree {
    flex: 1;
    overflow: hidden;
    border-right: 1px solid #161616;
}
.tree li {
    position: relative;
    display: flex;
    align-items: center;
    height: 25px;
    padding-top: 2px;
    padding-right: 9px;
    border-bottom: 1px solid #161616;
}
.tree svg {
    width: 18px;
    height: 18px;
    margin: 0 7px 2px 0;
}
.t1 { padding-left: 46px; }
.t2 { padding-left: 65px; }
.t3 { padding-left: 85px; }
.t4 { padding-left: 104px; }
.tree .mini-fill {
    width: 16px;
    height: 16px;
    fill: #ccc;
}
.mini-line {
    --knot: #bbb;
    fill: none;
    stroke: #bbb;
}
.open::before {
    content: "";
    width: 0;
    margin: 0 6px 0 -16px;
    border: 5px solid transparent;
    border-top: 7px solid #fff;
    border-bottom: 0;
}
.tree .var {
    width: 18px;
    height: 17px;
}
.tree .info {
    width: 14px;
    height: 14px;
    margin: 0 15px 0 auto;
}
.o {
    width: 6px;
    height: 6px;
    margin-left: auto;
    border: 1px solid #bbb;
    border-radius: 50%;
}
.info + .o {
    margin-left: 0;
}
.on {
    background: #352b20;
}
.ref {
    padding-left: 2px;
}
.tree .back {
    width: 20px;
    height: 20px;
    margin-right: 82px;
    padding: 4px;
    background: #2d2d2d;
}
.mark-tree {
    left: 63px;
    top: -22px;
    width: 213px;
    height: 47px;
    z-index: 1;
}
.strip {
    width: 34px;
    display: flex;
    flex-direction: column;
    align-items: center;
    gap: 16px;
    padding-top: 17px;
}
.strip svg {
    width: 18px;
    height: 18px;
}
.fx text {
    fill: #5f80cc;
    font-weight: 500;
}
.sql text {
    font: bold 8px Roboto, sans-serif;
    fill: #222;
    text-anchor: middle;
}
.help {
    position: absolute;
    right: 0;
    bottom: 40px;
    width: 34px;
    height: 96px;
    padding-top: 9px;
    border-radius: 3px 0 0 3px;
    background: #ffa800;
    color: #fff;
    line-height: 14px;
    text-align: center;
}
.help svg {
    margin: 5px auto 0;
}
.help text {
    font: bold 11px Roboto, sans-serif;
    fill: #ffa800;
    text-anchor: middle;
}
.watermark {
    position: absolute;
    right: 51px;
    bottom: 51px;
    display: flex;
    align-items: center;
    gap: 22px;
    color: #fff;
    font-size: 56px;
    line-height: 64px;
    text-shadow: 2px 3px 3px rgba(0, 0, 0, 0.6);
    white-space: nowrap;
}
.watermark b {
    font-size: 58px;
    font-weight: 500;
}
```
